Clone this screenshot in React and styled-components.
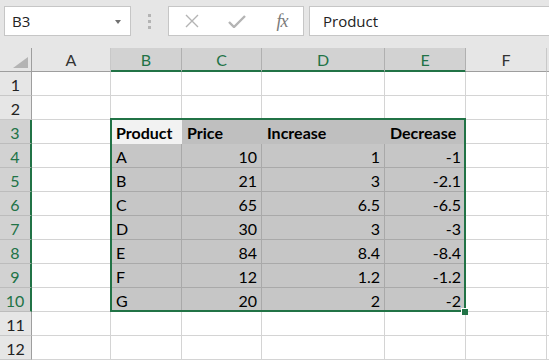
import { Fragment } from 'react'
import styled, { createGlobalStyle } from 'styled-components'

// Styles globaux : page blanche, pas de marge
const GlobalStyle = createGlobalStyle`
  html, body {
    margin: 0;
    padding: 0;
    background: #ffffff;
    overflow: hidden;
  }
  * {
    box-sizing: border-box;
  }
`

const GREEN = '#217346'

// Barre du haut (zone de nom + barre de formule)
const Toolbar = styled.div`
  display: flex;
  align-items: stretch;
  height: 48px;
  padding: 6px 0 12px 4px;
  background: #e6e6e6;
  font-family: 'Open Sans', 'Noto Sans', sans-serif;
`

const NameBox = styled.div`
  position: relative;
  width: 127px;
  display: flex;
  align-items: center;
  padding-left: 7px;
  background: #ffffff;
  border: 1px solid #c6c6c6;
  font-size: 15px;
  color: #222222;
`

const DropArrow = styled.span`
  position: absolute;
  right: 9px;
  top: 13px;
  width: 0;
  height: 0;
  border-left: 3px solid transparent;
  border-right: 3px solid transparent;
  border-top: 4px solid #707070;
`

const Grip = styled.div`
  width: 37px;
  display: flex;
  flex-direction: column;
  align-items: center;
  justify-content: center;
  gap: 3px;
  span {
    width: 3px;
    height: 3px;
    background: #b4b4b4;
  }
`

const FormulaButtons = styled.div`
  width: 136px;
  display: grid;
  grid-template-columns: 45px 45px 1fr;
  align-items: center;
  justify-items: center;
  background: #ffffff;
  border: 1px solid #c6c6c6;
`

const Fx = styled.span`
  font-family: 'Liberation Serif', serif;
  font-style: italic;
  font-size: 18px;
  color: #7a7a7a;
  letter-spacing: -1px;
  margin-left: 2px;
`

const FormulaInput = styled.div`
  flex: 1;
  margin-left: 5px;
  display: flex;
  align-items: center;
  padding-left: 13px;
  background: #ffffff;
  border: 1px solid #c6c6c6;
  border-right: none;
  font-size: 15px;
  color: #222222;
`

// Grille de la feuille
const Sheet = styled.div`
  position: relative;
  display: grid;
  grid-template-columns: 32px 79px 71px 80px 123px 81px 81px 1fr;
  grid-auto-rows: 24px;
  font-family: Lato, 'Noto Sans', sans-serif;
`

const Corner = styled.div`
  position: relative;
  background: #e6e6e6;
  border-right: 1px solid #9e9e9e;
  border-bottom: 1px solid #9e9e9e;
  &::after {
    content: '';
    position: absolute;
    right: 3px;
    bottom: 3px;
    width: 0;
    height: 0;
    border-left: 15px solid transparent;
    border-bottom: 11px solid #b4b4b4;
  }
`

const ColHeader = styled.div`
  display: flex;
  align-items: center;
  justify-content: center;
  font-size: 16px;
  background: ${({ $selected }) => ($selected ? '#d2d2d2' : '#e6e6e6')};
  color: ${({ $selected }) => ($selected ? GREEN : '#333333')};
  border-right: 1px solid ${({ $selected }) => ($selected ? '#b0b0b0' : '#c8c8c8')};
  border-bottom: 1px solid ${({ $selected }) => ($selected ? GREEN : '#9e9e9e')};
  box-shadow: ${({ $selected }) => ($selected ? `inset 0 -1px 0 ${GREEN}` : 'none')};
`

const RowHeader = styled.div`
  display: flex;
  align-items: center;
  justify-content: center;
  padding-top: 1px;
  font-size: 16px;
  background: ${({ $selected }) => ($selected ? '#d2d2d2' : '#e6e6e6')};
  color: ${({ $selected }) => ($selected ? GREEN : '#222222')};
  border-bottom: 1px solid ${({ $selected }) => ($selected ? '#bcbcbc' : '#c8c8c8')};
  border-right: ${({ $selected }) => ($selected ? `2px solid ${GREEN}` : '1px solid #9e9e9e')};
`

const cellColors = {
  empty: { bg: '#ffffff', right: '#d4d4d4', bottom: '#d4d4d4' },
  active: { bg: '#f2f2f2', right: '#f2f2f2', bottom: '#f2f2f2' },
  head: { bg: '#bfbfbf', right: '#bfbfbf', bottom: '#bfbfbf' },
  data: { bg: '#c6c6c6', right: '#a9a9a9', bottom: '#a9a9a9' },
}

const Cell = styled.div`
  display: flex;
  align-items: flex-end;
  justify-content: ${({ $right }) => ($right ? 'flex-end' : 'flex-start')};
  padding: 0 4px 1px 5px;
  font-size: 16px;
  line-height: 18px;
  font-weight: ${({ $bold }) => ($bold ? 700 : 400)};
  color: #000000;
  white-space: nowrap;
  background: ${({ $kind }) => cellColors[$kind].bg};
  border-right: 1px solid ${({ $kind }) => cellColors[$kind].right};
  border-bottom: 1px solid ${({ $kind }) => cellColors[$kind].bottom};
`

// Cadre vert de la sélection, posé par-dessus les cellules
const Selection = styled.div`
  position: absolute;
  left: 110px;
  top: 70px;
  width: 356px;
  height: 194px;
  border: 2px solid ${GREEN};
  pointer-events: none;
`

const FillHandle = styled.div`
  position: absolute;
  left: 461px;
  top: 260px;
  width: 7px;
  height: 7px;
  background: ${GREEN};
  border-top: 1px solid #ffffff;
  border-left: 1px solid #ffffff;
`

const columns = ['A', 'B', 'C', 'D', 'E', 'F', '']
const selectedCols = ['B', 'C', 'D', 'E']

const headers = ['Product', 'Price', 'Increase', 'Decrease']
const data = [
  ['A', '10', '1', '-1'],
  ['B', '21', '3', '-2.1'],
  ['C', '65', '6.5', '-6.5'],
  ['D', '30', '3', '-3'],
  ['E', '84', '8.4', '-8.4'],
  ['F', '12', '1.2', '-1.2'],
  ['G', '20', '2', '-2'],
]

function SheetRow({ r }) {
  const selected = r >= 3 && r <= 10
  return (
    <>
      <RowHeader $selected={selected}>{r}</RowHeader>
      {columns.map((col, c) => {
        const inRange = selected && c >= 1 && c <= 4
        if (inRange && r === 3) {
          return (
            <Cell key={c} $kind={c === 1 ? 'active' : 'head'} $bold>
              {headers[c - 1]}
            </Cell>
          )
        }
        if (inRange) {
          return (
            <Cell key={c} $kind="data" $right={c > 1}>
              {data[r - 4][c - 1]}
            </Cell>
          )
        }
        return <Cell key={c} $kind="empty" />
      })}
    </>
  )
}

export default function App() {
  const rowNumbers = Array.from({ length: 12 }, (_, i) => i + 1)

  return (
    <>
      <GlobalStyle />
      <Toolbar>
        <NameBox>
          B3
          <DropArrow />
        </NameBox>
        <Grip>
          <span />
          <span />
          <span />
        </Grip>
        <FormulaButtons>
          <svg width="14" height="14" viewBox="0 0 14 14">
            <path d="M1 1 L13 13 M13 1 L1 13" stroke="#b4b4b4" strokeWidth="1.4" fill="none" />
          </svg>
          <svg width="18" height="13" viewBox="0 0 18 13">
            <path d="M1 7 L6 12 L17 1" stroke="#b4b4b4" strokeWidth="2.4" fill="none" />
          </svg>
          <Fx>fx</Fx>
        </FormulaButtons>
        <FormulaInput>Product</FormulaInput>
      </Toolbar>
      <Sheet>
        <Corner />
        {columns.map((col, i) => (
          <ColHeader key={i} $selected={selectedCols.includes(col)}>
            {col}
          </ColHeader>
        ))}
        {rowNumbers.map((r) => (
          <Fragment key={r}>
            <SheetRow r={r} />
          </Fragment>
        ))}
        <Selection />
        <FillHandle />
      </Sheet>
    </>
  )
}
